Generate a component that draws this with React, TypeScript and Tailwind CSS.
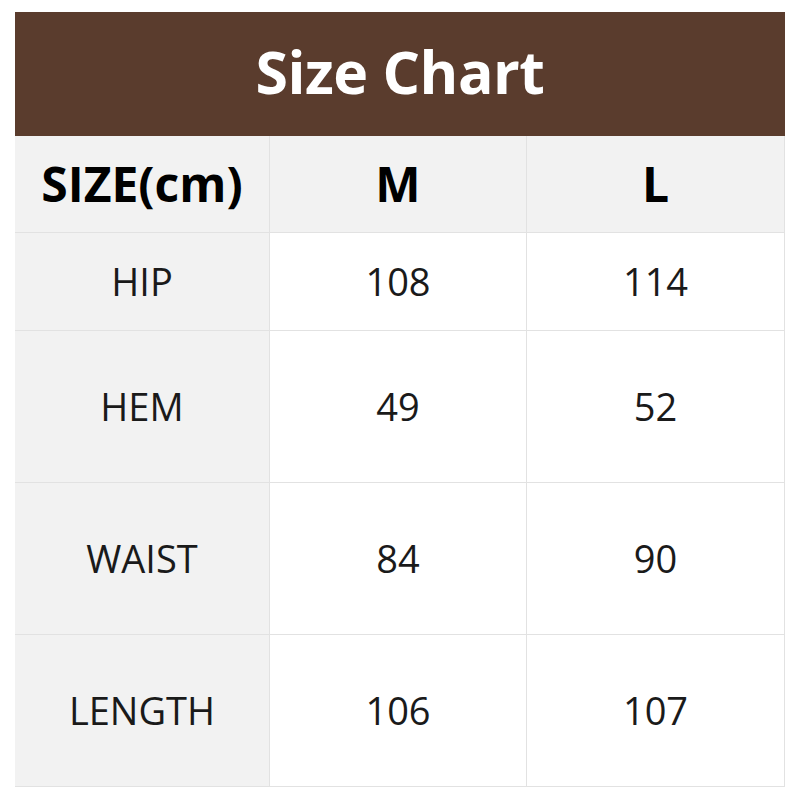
const rows = [
  { label: "HIP", m: "108", l: "114", h: "h-[98px]" },
  { label: "HEM", m: "49", l: "52", h: "h-[152px]" },
  { label: "WAIST", m: "84", l: "90", h: "h-[152px]" },
  { label: "LENGTH", m: "106", l: "107", h: "h-[152px]" },
];

export default function App() {
  return (
    <div
      className="h-[800px] w-[800px] bg-white px-[15px] pt-[12px]"
      style={{ fontFamily: '"Open Sans", "Noto Sans", sans-serif' }}
    >
      <div className="flex h-[124px] w-[770px] items-center justify-center bg-[#5a3c2d]">
        <h1 className="-mt-[6px] text-[59px] font-bold leading-none tracking-[-0.5px] text-white">
          Size Chart
        </h1>
      </div>

      <div className="grid w-[770px] grid-cols-[255px_257px_258px] text-[#1a1a1a]">
        {/* header row */}
        <div className="flex h-[97px] items-center justify-center border-b border-r border-[#e2e2e2] bg-[#f2f2f2] text-[48px] font-bold text-black">
          SIZE(cm)
        </div>
        <div className="flex h-[97px] items-center justify-center border-b border-r border-[#e2e2e2] bg-[#f2f2f2] text-[48px] font-bold text-black">
          M
        </div>
        <div className="flex h-[97px] items-center justify-center border-b border-r border-[#e2e2e2] bg-[#f2f2f2] text-[48px] font-bold text-black">
          L
        </div>

        {rows.map((row) => (
          <div key={row.label} className="contents">
            <div
              className={`flex ${row.h} items-center justify-center border-b border-r border-[#e2e2e2] bg-[#f2f2f2] text-[38px]`}
            >
              {row.label}
            </div>
            <div
              className={`flex ${row.h} items-center justify-center border-b border-r border-[#e2e2e2] bg-white text-[38px]`}
            >
              {row.m}
            </div>
            <div
              className={`flex ${row.h} items-center justify-center border-b border-r border-[#e2e2e2] bg-white text-[38px]`}
            >
              {row.l}
            </div>
          </div>
        ))}
      </div>
    </div>
  );
}
